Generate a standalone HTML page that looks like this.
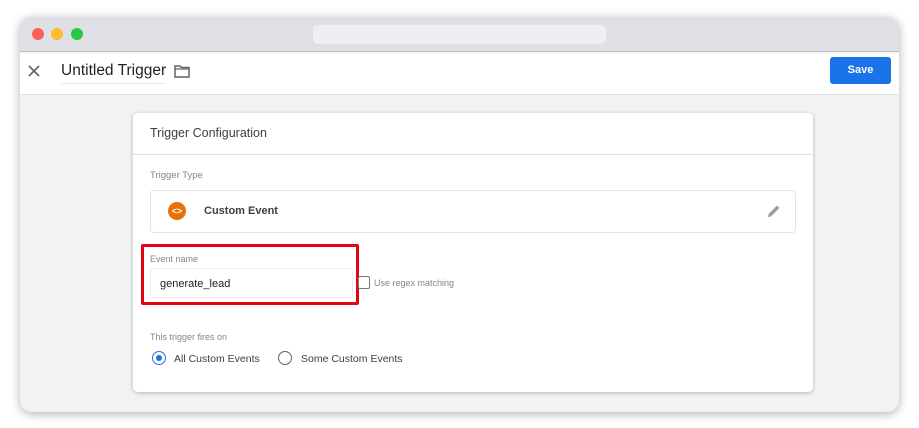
<!DOCTYPE html>
<html><head><meta charset="utf-8"><style>
*{margin:0;padding:0;box-sizing:border-box}
body{width:919px;height:428px;background:#fff;position:relative;overflow:hidden;font-family:"Liberation Sans",Arial,sans-serif;color:#202124}
.a{position:absolute}
.win{left:20px;top:17px;width:879px;height:395px;border-radius:12px;background:#f1f2f4;overflow:hidden;box-shadow:0 2px 10px rgba(0,0,0,.3)}
.t{font-size:11px;white-space:nowrap}
</style></head><body>
<div class="a win">
  <div class="a" style="left:0;top:0;width:879px;height:35px;background:#dfe0e5;border-bottom:1px solid #bfc0c4"></div>
  <div class="a" style="left:12px;top:11px;width:12px;height:12px;border-radius:50%;background:#fe5f57"></div>
  <div class="a" style="left:31px;top:11px;width:12px;height:12px;border-radius:50%;background:#febc2e"></div>
  <div class="a" style="left:51px;top:11px;width:12px;height:12px;border-radius:50%;background:#28c840"></div>
  <div class="a" style="left:293px;top:8px;width:293px;height:19px;border-radius:5px;background:#eeeff1"></div>
  <div class="a" style="left:0;top:36px;width:879px;height:42px;background:#fff;border-bottom:1px solid #e3e4e8"></div>
</div>
<svg class="a" style="left:28px;top:65px" width="12" height="12" viewBox="0 0 12 12"><path d="M1 1L11 11M11 1L1 11" stroke="#5f6368" stroke-width="1.6"/></svg>
<div class="a" style="left:61px;top:62px;font-size:15.5px;color:#202124;border-bottom:1px solid #e8e8e8;padding-bottom:3px">Untitled Trigger</div>
<svg class="a" style="left:174px;top:64px" width="16" height="14" viewBox="0 0 16 14"><path d="M1 2h5l1.5 1.5H15V13H1Z" fill="none" stroke="#5f6368" stroke-width="1.5"/><path d="M1 5H15" stroke="#5f6368" stroke-width="1.2"/></svg>
<div class="a" style="left:830px;top:57px;width:61px;height:27px;background:#1a73e8;border-radius:3px;color:#fff;font-size:11px;font-weight:bold;text-align:center;line-height:27px">Save</div>

<div class="a" style="left:133px;top:113px;width:680px;height:279px;background:#fff;border-radius:5px;box-shadow:0 1px 4px rgba(0,0,0,.25)"></div>
<div class="a" style="left:133px;top:154px;width:680px;height:1px;background:#e0e0e0"></div>
<div class="a t" style="left:150px;top:126px;font-size:12.5px;color:#3c4043">Trigger Configuration</div>
<div class="a t" style="left:150px;top:170px;font-size:9.5px;color:#80868b">Trigger Type</div>
<div class="a" style="left:150px;top:190px;width:646px;height:43px;border:1px solid #e3e3e3;border-radius:4px"></div>
<div class="a" style="left:168px;top:202px;width:18px;height:18px;border-radius:50%;background:#e8710a;color:#fff;font-size:9px;font-weight:bold;text-align:center;line-height:18px">&lt;&gt;</div>
<div class="a t" style="left:204px;top:205px;font-weight:600;color:#3c4043;font-size:11px">Custom Event</div>
<svg class="a" style="left:767px;top:204px" width="14" height="14" viewBox="0 0 14 14"><path d="M1 13l0.5-3L10 1.5l2.5 2.5L4 12.5Z" fill="#9aa0a6"/></svg>

<div class="a" style="left:141px;top:244px;width:218px;height:61px;border:3.5px solid #e20613;border-radius:2px"></div>
<div class="a t" style="left:150px;top:254px;font-size:9px;color:#80868b">Event name</div>
<div class="a" style="left:150px;top:268px;width:203px;height:30px;border:1px solid #eee;border-radius:3px;background:#fff"></div>
<div class="a t" style="left:160px;top:278px;color:#202124">generate_lead</div>
<div class="a" style="left:358px;top:276px;width:12px;height:13px;border:1.5px solid #777;border-radius:2px"></div>
<div class="a t" style="left:374px;top:278px;font-size:9px;color:#80868b">Use regex matching</div>

<div class="a t" style="left:150px;top:332px;font-size:9px;color:#80868b">This trigger fires on</div>
<div class="a" style="left:152px;top:351px;width:14px;height:14px;border:1.5px solid #1a73e8;border-radius:50%"></div>
<div class="a" style="left:156px;top:355px;width:6px;height:6px;background:#1a73e8;border-radius:50%"></div>
<div class="a t" style="left:174px;top:353px;color:#3c4043;font-size:10.5px">All Custom Events</div>
<div class="a" style="left:278px;top:351px;width:14px;height:14px;border:1.5px solid #5f6368;border-radius:50%"></div>
<div class="a t" style="left:301px;top:353px;color:#3c4043;font-size:10.5px">Some Custom Events</div>
</body></html>
